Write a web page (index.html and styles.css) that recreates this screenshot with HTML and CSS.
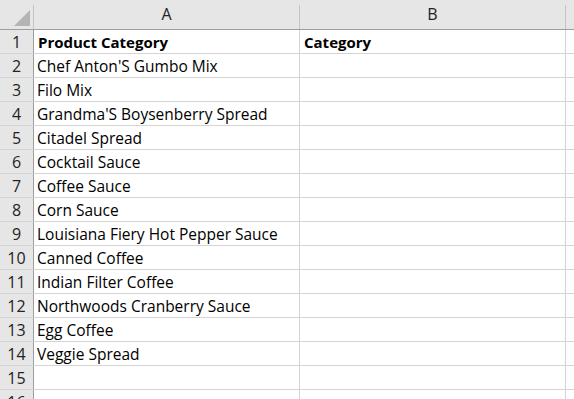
FILE: index.html
```html
<!DOCTYPE html>
<html lang="en">
<head>
    <meta charset="UTF-8">
    <title>Sheet1</title>
    <link rel="stylesheet" href="styles.css">
</head>
<body>

<div class="sheet">
    <div class="col-heads">
        <div class="corner"><span class="select-all"></span></div>
        <div class="col-head">A</div>
        <div class="col-head">B</div>
        <div class="col-head"></div>
    </div>

    <div class="cells">
        <div class="row-head">1</div><div class="cell bold">Product Category</div><div class="cell bold">Category</div><div class="cell"></div>
        <div class="row-head">2</div><div class="cell">Chef Anton'S Gumbo Mix</div><div class="cell"></div><div class="cell"></div>
        <div class="row-head">3</div><div class="cell">Filo Mix</div><div class="cell"></div><div class="cell"></div>
        <div class="row-head">4</div><div class="cell">Grandma'S Boysenberry Spread</div><div class="cell"></div><div class="cell"></div>
        <div class="row-head">5</div><div class="cell">Citadel Spread</div><div class="cell"></div><div class="cell"></div>
        <div class="row-head">6</div><div class="cell">Cocktail Sauce</div><div class="cell"></div><div class="cell"></div>
        <div class="row-head">7</div><div class="cell">Coffee Sauce</div><div class="cell"></div><div class="cell"></div>
        <div class="row-head">8</div><div class="cell">Corn Sauce</div><div class="cell"></div><div class="cell"></div>
        <div class="row-head">9</div><div class="cell">Louisiana Fiery Hot Pepper Sauce</div><div class="cell"></div><div class="cell"></div>
        <div class="row-head">10</div><div class="cell">Canned Coffee</div><div class="cell"></div><div class="cell"></div>
        <div class="row-head">11</div><div class="cell">Indian Filter Coffee</div><div class="cell"></div><div class="cell"></div>
        <div class="row-head">12</div><div class="cell">Northwoods Cranberry Sauce</div><div class="cell"></div><div class="cell"></div>
        <div class="row-head">13</div><div class="cell">Egg Coffee</div><div class="cell"></div><div class="cell"></div>
        <div class="row-head">14</div><div class="cell">Veggie Spread</div><div class="cell"></div><div class="cell"></div>
        <div class="row-head">15</div><div class="cell"></div><div class="cell"></div><div class="cell"></div>
        <div class="row-head">16</div><div class="cell"></div><div class="cell"></div><div class="cell"></div>
    </div>
</div>

</body>
</html>
```

FILE: styles.css
```css
body {
    margin: 0;
    background-color: #fff;
    font-family: "Open Sans", "Liberation Sans", sans-serif;
    color: #000;
    overflow: hidden;
}
.sheet {
    width: 574px;
    height: 399px;
    overflow: hidden;
}
.col-heads {
    display: grid;
    grid-template-columns: 33px 265px 265px 1fr;
    column-gap: 1px;
    height: 29px;
    background-color: #e6e6e6;
    border-bottom: 1px solid #9e9e9e;
}
.col-head,
.corner {
    position: relative;
    background-color: #e6e6e6;
    font-size: 16px;
    line-height: 29px;
    text-align: center;
    color: #222;
}
/* separators in the header start a few px below the top */
.col-head::before {
    content: '';
    position: absolute;
    left: -1px;
    top: 5px;
    bottom: 0;
    width: 1px;
    background-color: #c4c4c4;
}
.corner::after {
    content: '';
    position: absolute;
    right: -1px;
    top: 5px;
    bottom: 0;
    width: 1px;
    background-color: #9e9e9e;
}
.col-head:first-of-type::before {
    display: none;
}
.select-all {
    position: absolute;
    left: 14px;
    top: 10px;
    width: 0;
    height: 0;
    border-left: 16px solid transparent;
    border-bottom: 16px solid #b4b4b4;
}
.cells {
    display: grid;
    grid-template-columns: 33px 265px 265px 1fr;
    grid-auto-rows: 23px;
    gap: 1px;
    background-color: #d4d4d4;
}
.row-head {
    background-color: #e6e6e6;
    border-right: 1px solid #9e9e9e;
    margin-right: -1px;
    font-size: 16px;
    line-height: 24px;
    text-align: center;
    color: #222;
}
.cell {
    background-color: #fff;
    font-size: 15.5px;
    line-height: 24px;
    padding-left: 3px;
    white-space: nowrap;
    overflow: hidden;
}
.bold {
    font-size: 15px;
    font-weight: bold;
    padding-left: 4px;
}
```
